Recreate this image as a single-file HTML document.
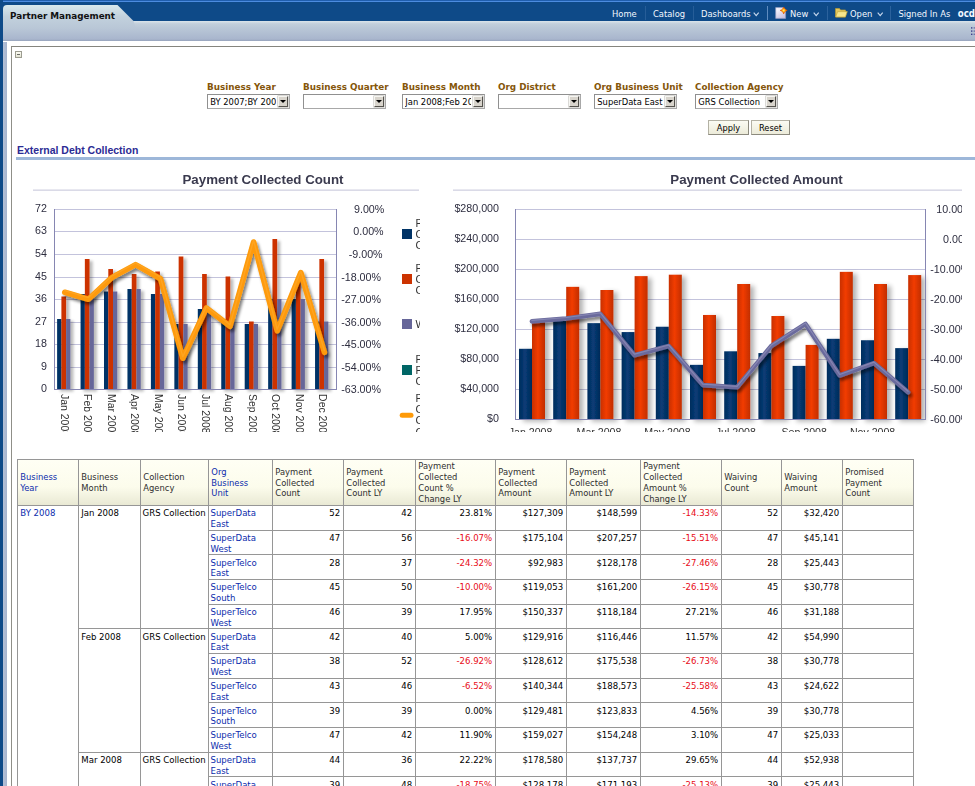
<!DOCTYPE html><html><head><meta charset="utf-8"><title>Partner Management</title><style>
html,body{margin:0;padding:0;}
body{width:975px;height:786px;overflow:hidden;background:#fff;position:relative;font-family:"DejaVu Sans Condensed","DejaVu Sans","Liberation Sans",sans-serif;font-size:9.2px;color:#000;}
.a{position:absolute;}
.t{position:absolute;white-space:nowrap;line-height:12px;}
.b{font-weight:bold;}
.nav{color:#f4f8ff;font-size:9.3px;top:8px;}
.lbl{color:#85560a;font-weight:bold;font-family:"DejaVu Sans","Liberation Sans",sans-serif;font-size:8.8px;top:81.2px;}
.sel{position:absolute;top:94.3px;height:12.6px;width:81px;border:1px solid #a8a8a8;border-top-color:#909090;border-left-color:#909090;background:#fff;overflow:hidden;}
.sel span{position:absolute;left:2.3px;top:1px;width:66px;overflow:hidden;line-height:12px;white-space:nowrap;font-size:9.3px;}
.sel i{position:absolute;right:0.6px;top:1px;width:8.4px;height:8.4px;background:#d8d4cc;border:1px solid #f6f6f2;border-right-color:#55534e;border-bottom-color:#55534e;box-shadow:0 0 0 0.5px #b8b6b0;}
.sel i:after{content:"";position:absolute;left:1.2px;top:2.8px;border-left:3px solid transparent;border-right:3px solid transparent;border-top:3px solid #000;}
.btn{position:absolute;top:119.6px;height:13px;border:1px solid #b3b1a4;border-right-color:#8c8a7e;border-bottom-color:#8c8a7e;background:linear-gradient(#fbfbf3,#ecebd9);text-align:center;line-height:13px;font-size:9.2px;}
.hc{position:absolute;top:460px;height:45px;background:linear-gradient(#fffff4 0%,#fcfcec 60%,#e9e9d4 100%);}
.ht{position:absolute;left:2.3px;line-height:10.8px;font-size:9.3px;color:#2e2e2e;white-space:nowrap;}
.lnk{color:#0c2cac;}
.vl{position:absolute;width:1px;background:#969696;}
.hl{position:absolute;height:1px;background:#969696;}
.c{position:absolute;line-height:10.8px;font-size:9.5px;white-space:nowrap;}
.r{text-align:right;}
.neg{color:#e80c18;}
</style></head><body>
<div class="a" style="left:0;top:0;width:975px;height:21px;background:#0e4a88;"></div>
<div class="a" style="left:0;top:0;width:975px;height:2px;background:linear-gradient(#1f5eae 0%,#1f5eae 40%,#4c8ce0 55%,#4c8ce0 100%);"></div>
<div class="a" style="left:3px;top:21px;width:972px;height:20px;background:linear-gradient(#dbe5eb 0%,#c2cfdb 14%,#b9c7d7 35%,#a9b6cd 90%,#97a4bc 100%);"></div>
<div class="a" style="left:0;top:0;width:3px;height:786px;background:#0e4a88;"></div>
<div class="a" style="left:3px;top:42px;width:4px;height:745px;background:linear-gradient(90deg,#b4c0d6,#a6b4ce);"></div>
<svg class="a" style="left:0;top:0" width="140" height="42"><defs><linearGradient id="tg" x1="0" y1="5" x2="0" y2="28" gradientUnits="userSpaceOnUse"><stop offset="0" stop-color="#d8e8ec"/><stop offset="0.5" stop-color="#c2d1dd"/><stop offset="1" stop-color="#b9c7d7"/></linearGradient></defs><path d="M3 28 L3 9 Q3 5 7 5 L117.5 5 L133.5 21 L136 28 Z" fill="url(#tg)"/></svg>
<div class="t b" style="left:10px;top:9.6px;font-family:'DejaVu Sans','Liberation Sans',sans-serif;font-size:8.8px;color:#111;">Partner Management</div>
<div class="t nav" style="left:612px;">Home</div>
<div class="t nav" style="left:653px;">Catalog</div>
<div class="t nav" style="left:701px;">Dashboards</div>
<div class="t nav" style="left:790px;">New</div>
<div class="t nav" style="left:850px;">Open</div>
<div class="t nav" style="left:898.4px;">Signed In As</div>
<div class="t nav b" style="left:957.8px;font-size:9.6px;">ocd</div>
<svg class="a" style="left:753px;top:12px" width="7" height="5"><path d="M0.7 0.7 L3.2 3.6 L5.7 0.7" fill="none" stroke="#c8d8ee" stroke-width="1.1"/></svg>
<svg class="a" style="left:813px;top:12px" width="7" height="5"><path d="M0.7 0.7 L3.2 3.6 L5.7 0.7" fill="none" stroke="#c8d8ee" stroke-width="1.1"/></svg>
<svg class="a" style="left:877px;top:12px" width="7" height="5"><path d="M0.7 0.7 L3.2 3.6 L5.7 0.7" fill="none" stroke="#c8d8ee" stroke-width="1.1"/></svg>
<div class="a" style="left:645px;top:6px;width:1px;height:14px;background:rgba(150,185,230,0.18);"></div>
<div class="a" style="left:693px;top:6px;width:1px;height:14px;background:rgba(150,185,230,0.18);"></div>
<div class="a" style="left:767px;top:6px;width:1px;height:14px;background:rgba(150,185,230,0.6);"></div>
<div class="a" style="left:827px;top:6px;width:1px;height:14px;background:rgba(150,185,230,0.22);"></div>
<div class="a" style="left:890px;top:6px;width:1px;height:14px;background:rgba(150,185,230,0.22);"></div>
<svg class="a" style="left:775px;top:5px" width="14" height="15"><defs><linearGradient id="pg" x1="0" y1="0" x2="0.6" y2="1"><stop offset="0" stop-color="#ffffff"/><stop offset="1" stop-color="#c9c3e2"/></linearGradient><radialGradient id="st" cx="0.5" cy="0.5" r="0.5"><stop offset="0" stop-color="#fff27a"/><stop offset="0.55" stop-color="#ffc020"/><stop offset="1" stop-color="#f06a00"/></radialGradient></defs><path d="M0.7 2.6 H8 L10.6 5.2 V13.4 H0.7 Z" fill="url(#pg)" stroke="#8e98c0" stroke-width="0.7"/><path d="M8.7 2 L9.7 4.4 L12.2 5.4 L9.7 6.4 L8.7 8.9 L7.7 6.4 L5.2 5.4 L7.7 4.4 Z" fill="url(#st)" stroke="#e05800" stroke-width="0.7" stroke-linejoin="round"/><circle cx="8.7" cy="5.4" r="2.1" fill="url(#st)"/></svg>
<svg class="a" style="left:835px;top:7px" width="13" height="11"><path d="M0.5 10 V1.5 H4.5 L5.5 3 H10.5 V10 Z" fill="#e2c860" stroke="#b89a30" stroke-width="0.7"/><path d="M0.7 10 L2.6 4.6 H12.3 L10.4 10 Z" fill="#f6e68c" stroke="#c4a73c" stroke-width="0.7"/></svg>
<svg class="a" style="left:970px;top:26px" width="5" height="10"><g fill="#3e3e8c"><rect x="1" y="1.2" width="1.4" height="1.4"/><rect x="3.6" y="1.2" width="1.4" height="1.4" opacity="0.6"/><rect x="1" y="4.4" width="1.4" height="1.4"/><rect x="3.6" y="4.4" width="1.4" height="1.4" opacity="0.6"/><rect x="1" y="7.6" width="1.4" height="1.4"/><rect x="3.6" y="7.6" width="1.4" height="1.4" opacity="0.6"/></g></svg>
<div class="a" style="left:11px;top:46px;width:970px;height:760px;border:1px solid #8f8f88;border-top-color:#85857e;"></div>
<div class="a" style="left:15px;top:51px;width:5px;height:5px;border:1px solid #9c9c90;background:linear-gradient(#fbfbf2,#e2e2d2);"><div class="a" style="left:0.8px;top:1.9px;width:3.4px;height:1.1px;background:#6a6a66;"></div></div>
<div class="t lbl" style="left:207px;">Business Year</div>
<div class="sel" style="left:207px;"><span>BY 2007;BY 2008</span><i></i></div>
<div class="t lbl" style="left:303px;">Business Quarter</div>
<div class="sel" style="left:303px;"><span></span><i></i></div>
<div class="t lbl" style="left:402px;">Business Month</div>
<div class="sel" style="left:402px;"><span>Jan 2008;Feb 2008;Mar 2008</span><i></i></div>
<div class="t lbl" style="left:498px;">Org District</div>
<div class="sel" style="left:498px;"><span></span><i></i></div>
<div class="t lbl" style="left:594px;">Org Business Unit</div>
<div class="sel" style="left:594px;"><span>SuperData East</span><i></i></div>
<div class="t lbl" style="left:695px;">Collection Agency</div>
<div class="sel" style="left:695px;"><span>GRS Collection</span><i></i></div>
<div class="btn" style="left:708px;width:39px;">Apply</div>
<div class="btn" style="left:751px;width:37px;">Reset</div>
<div class="t b" style="left:17px;top:143.9px;font-family:'Liberation Sans',Arial,sans-serif;font-size:10.5px;color:#2b2b94;">External Debt Collection</div>
<div class="a" style="left:16px;top:157px;width:959px;height:3px;background:#9db7d9;"></div>
<div class="a" style="left:33px;top:165px;width:387px;height:267px;overflow:hidden;">
<svg width="387" height="287" viewBox="33 165 387 287" style="position:absolute;left:0;top:0;opacity:0.999;font-family:'Liberation Sans',Arial,sans-serif;">
<defs>
<filter id="sh1" x="-30%" y="-10%" width="180%" height="120%"><feGaussianBlur in="SourceAlpha" stdDeviation="1.8"/><feOffset dx="2.5" dy="1.5"/><feComponentTransfer><feFuncA type="linear" slope="0.28"/></feComponentTransfer><feMerge><feMergeNode/><feMergeNode in="SourceGraphic"/></feMerge></filter>
<filter id="sh2" x="-10%" y="-20%" width="120%" height="140%"><feGaussianBlur in="SourceAlpha" stdDeviation="1.8"/><feOffset dx="2" dy="3"/><feComponentTransfer><feFuncA type="linear" slope="0.5"/></feComponentTransfer><feMerge><feMergeNode/><feMergeNode in="SourceGraphic"/></feMerge></filter>
<linearGradient id="og" x1="0" y1="0" x2="0" y2="1"><stop offset="0" stop-color="#ffb437"/><stop offset="1" stop-color="#f58f00"/></linearGradient>
</defs>
<text x="263" y="184" text-anchor="middle" font-size="13.3" font-weight="bold" fill="#3a3a4e">Payment Collected Count</text>
<rect x="33" y="189.5" width="386" height="1.3" fill="#d2d2e2"/>
<rect x="54.4" y="209" width="282.0" height="1" fill="#c3c3dc"/>
<rect x="54.4" y="231" width="282.0" height="1" fill="#c3c3dc"/>
<rect x="54.4" y="254" width="282.0" height="1" fill="#c3c3dc"/>
<rect x="54.4" y="277" width="282.0" height="1" fill="#c3c3dc"/>
<rect x="54.4" y="299" width="282.0" height="1" fill="#c3c3dc"/>
<rect x="54.4" y="322" width="282.0" height="1" fill="#c3c3dc"/>
<rect x="54.4" y="344" width="282.0" height="1" fill="#c3c3dc"/>
<rect x="54.4" y="367" width="282.0" height="1" fill="#c3c3dc"/>
<text x="46.9" y="212.2" text-anchor="end" font-size="10.7" fill="#2e2e40">72</text>
<text x="46.9" y="234.2" text-anchor="end" font-size="10.7" fill="#2e2e40">63</text>
<text x="46.9" y="257.2" text-anchor="end" font-size="10.7" fill="#2e2e40">54</text>
<text x="46.9" y="280.2" text-anchor="end" font-size="10.7" fill="#2e2e40">45</text>
<text x="46.9" y="302.2" text-anchor="end" font-size="10.7" fill="#2e2e40">36</text>
<text x="46.9" y="325.2" text-anchor="end" font-size="10.7" fill="#2e2e40">27</text>
<text x="46.9" y="347.2" text-anchor="end" font-size="10.7" fill="#2e2e40">18</text>
<text x="46.9" y="370.2" text-anchor="end" font-size="10.7" fill="#2e2e40">9</text>
<text x="46.9" y="392.2" text-anchor="end" font-size="10.7" fill="#2e2e40">0</text>
<text x="384.3" y="212.9" text-anchor="end" font-size="10.7" fill="#2e2e40">9.00%</text>
<text x="383.6" y="234.9" text-anchor="end" font-size="10.7" fill="#2e2e40">0.00%</text>
<text x="382.6" y="257.9" text-anchor="end" font-size="10.7" fill="#2e2e40">-9.00%</text>
<text x="381" y="280.9" text-anchor="end" font-size="10.7" fill="#2e2e40">-18.00%</text>
<text x="381" y="302.9" text-anchor="end" font-size="10.7" fill="#2e2e40">-27.00%</text>
<text x="381" y="325.9" text-anchor="end" font-size="10.7" fill="#2e2e40">-36.00%</text>
<text x="381" y="347.9" text-anchor="end" font-size="10.7" fill="#2e2e40">-45.00%</text>
<text x="381" y="370.9" text-anchor="end" font-size="10.7" fill="#2e2e40">-54.00%</text>
<text x="381" y="392.9" text-anchor="end" font-size="10.7" fill="#2e2e40">-63.00%</text>
<g filter="url(#sh1)">
<rect x="57.10" y="319.00" width="4.3" height="70.50" fill="#003366"/>
<rect x="61.40" y="296.50" width="4.7" height="93.00" fill="#cc3300"/>
<rect x="66.10" y="319.00" width="4.3" height="70.50" fill="#666699"/>
<rect x="80.55" y="294.00" width="4.3" height="95.50" fill="#003366"/>
<rect x="84.85" y="259.00" width="4.7" height="130.50" fill="#cc3300"/>
<rect x="89.55" y="294.00" width="4.3" height="95.50" fill="#666699"/>
<rect x="104.00" y="291.50" width="4.3" height="98.00" fill="#003366"/>
<rect x="108.30" y="269.00" width="4.7" height="120.50" fill="#cc3300"/>
<rect x="113.00" y="291.50" width="4.3" height="98.00" fill="#666699"/>
<rect x="127.45" y="289.00" width="4.3" height="100.50" fill="#003366"/>
<rect x="131.75" y="274.00" width="4.7" height="115.50" fill="#cc3300"/>
<rect x="136.45" y="289.00" width="4.3" height="100.50" fill="#666699"/>
<rect x="150.90" y="294.00" width="4.3" height="95.50" fill="#003366"/>
<rect x="155.20" y="271.50" width="4.7" height="118.00" fill="#cc3300"/>
<rect x="159.90" y="294.00" width="4.3" height="95.50" fill="#666699"/>
<rect x="174.35" y="324.00" width="4.3" height="65.50" fill="#003366"/>
<rect x="178.65" y="256.50" width="4.7" height="133.00" fill="#cc3300"/>
<rect x="183.35" y="324.00" width="4.3" height="65.50" fill="#666699"/>
<rect x="197.80" y="309.00" width="4.3" height="80.50" fill="#003366"/>
<rect x="202.10" y="274.00" width="4.7" height="115.50" fill="#cc3300"/>
<rect x="206.80" y="309.00" width="4.3" height="80.50" fill="#666699"/>
<rect x="221.25" y="319.00" width="4.3" height="70.50" fill="#003366"/>
<rect x="225.55" y="276.50" width="4.7" height="113.00" fill="#cc3300"/>
<rect x="230.25" y="319.00" width="4.3" height="70.50" fill="#666699"/>
<rect x="244.70" y="324.00" width="4.3" height="65.50" fill="#003366"/>
<rect x="249.00" y="321.50" width="4.7" height="68.00" fill="#cc3300"/>
<rect x="253.70" y="324.00" width="4.3" height="65.50" fill="#666699"/>
<rect x="268.15" y="299.00" width="4.3" height="90.50" fill="#003366"/>
<rect x="272.45" y="239.00" width="4.7" height="150.50" fill="#cc3300"/>
<rect x="277.15" y="299.00" width="4.3" height="90.50" fill="#666699"/>
<rect x="291.60" y="299.00" width="4.3" height="90.50" fill="#003366"/>
<rect x="295.90" y="279.00" width="4.7" height="110.50" fill="#cc3300"/>
<rect x="300.60" y="299.00" width="4.3" height="90.50" fill="#666699"/>
<rect x="315.05" y="321.50" width="4.3" height="68.00" fill="#003366"/>
<rect x="319.35" y="259.00" width="4.7" height="130.50" fill="#cc3300"/>
<rect x="324.05" y="321.50" width="4.3" height="68.00" fill="#666699"/>
</g>
<rect x="54" y="209" width="1" height="181" fill="#8686b2"/>
<rect x="336" y="209" width="1" height="181" fill="#8686b2"/>
<rect x="54" y="389" width="283" height="1" fill="#8686b2"/>
<text transform="translate(60.7,394.1) rotate(90) scale(0.985,1.06)" font-size="10.6" fill="#333">Jan 2008</text>
<text transform="translate(84.2,394.1) rotate(90) scale(0.985,1.06)" font-size="10.6" fill="#333">Feb 2008</text>
<text transform="translate(107.7,394.1) rotate(90) scale(0.985,1.06)" font-size="10.6" fill="#333">Mar 2008</text>
<text transform="translate(131.2,394.1) rotate(90) scale(0.985,1.06)" font-size="10.6" fill="#333">Apr 2008</text>
<text transform="translate(154.7,394.1) rotate(90) scale(0.985,1.06)" font-size="10.6" fill="#333">May 2008</text>
<text transform="translate(178.2,394.1) rotate(90) scale(0.985,1.06)" font-size="10.6" fill="#333">Jun 2008</text>
<text transform="translate(201.7,394.1) rotate(90) scale(0.985,1.06)" font-size="10.6" fill="#333">Jul 2008</text>
<text transform="translate(225.2,394.1) rotate(90) scale(0.985,1.06)" font-size="10.6" fill="#333">Aug 2008</text>
<text transform="translate(248.7,394.1) rotate(90) scale(0.985,1.06)" font-size="10.6" fill="#333">Sep 2008</text>
<text transform="translate(272.1,394.1) rotate(90) scale(0.985,1.06)" font-size="10.6" fill="#333">Oct 2008</text>
<text transform="translate(295.6,394.1) rotate(90) scale(0.985,1.06)" font-size="10.6" fill="#333">Nov 2008</text>
<text transform="translate(319.1,394.1) rotate(90) scale(0.985,1.06)" font-size="10.6" fill="#333">Dec 2008</text>
<polyline points="64.8,292.3 88.4,299.2 112.0,277.4 135.6,264.6 160.5,278.8 182.8,358.2 206.4,308 230.0,326.3 253.6,242.0 277.2,330.9 300.8,272.6 324.4,352.3" fill="none" stroke="#fe9a08" stroke-width="5.6" stroke-linejoin="round" stroke-linecap="round" filter="url(#sh2)"/>
<polyline points="64.8,292.3 88.4,299.2 112.0,277.4 135.6,264.6 160.5,278.8 182.8,358.2 206.4,308 230.0,326.3 253.6,242.0 277.2,330.9 300.8,272.6 324.4,352.3" fill="none" stroke="#ffbe50" stroke-width="1.4" stroke-linejoin="round" stroke-linecap="round" transform="translate(0,-1.6)" opacity="0.3"/>
<rect x="402" y="229" width="10" height="10" fill="#003366"/>
<text x="415.5" y="226.5" font-size="10.6" fill="#333">Payment</text>
<text x="415.5" y="237.8" font-size="10.6" fill="#333">Collected</text>
<text x="415.5" y="249.1" font-size="10.6" fill="#333">Count</text>
<rect x="402" y="274" width="10" height="10" fill="#cc3300"/>
<text x="415.5" y="271.5" font-size="10.6" fill="#333">Payment</text>
<text x="415.5" y="282.8" font-size="10.6" fill="#333">Collected</text>
<text x="415.5" y="294.1" font-size="10.6" fill="#333">Count LY</text>
<rect x="402" y="319" width="10" height="10" fill="#666699"/>
<text x="415.5" y="327.8" font-size="10.6" fill="#333">Waiving Count</text>
<rect x="402" y="365" width="10" height="10" fill="#006666"/>
<text x="415.5" y="362.5" font-size="10.6" fill="#333">Promised</text>
<text x="415.5" y="373.8" font-size="10.6" fill="#333">Payment</text>
<text x="415.5" y="385.1" font-size="10.6" fill="#333">Count</text>
<line x1="402.2" y1="415.3" x2="411" y2="415.3" stroke="#fe9a08" stroke-width="5" stroke-linecap="round"/>
<text x="415.5" y="401.9" font-size="10.6" fill="#333">Payment</text>
<text x="415.5" y="413.2" font-size="10.6" fill="#333">Collected</text>
<text x="415.5" y="424.4" font-size="10.6" fill="#333">Count %</text>
<text x="415.5" y="435.8" font-size="10.6" fill="#333">Change LY</text>
</svg></div>
<div class="a" style="left:453px;top:165px;width:509px;height:267px;overflow:hidden;">
<svg width="509" height="287" viewBox="453 165 509 287" style="position:absolute;left:0;top:0;opacity:0.999;font-family:'Liberation Sans',Arial,sans-serif;">
<defs>
<filter id="sh3" x="-30%" y="-10%" width="180%" height="120%"><feGaussianBlur in="SourceAlpha" stdDeviation="2.5"/><feOffset dx="3.8" dy="1.5"/><feComponentTransfer><feFuncA type="linear" slope="0.3"/></feComponentTransfer><feMerge><feMergeNode/><feMergeNode in="SourceGraphic"/></feMerge></filter>
<filter id="sh4" x="-10%" y="-20%" width="120%" height="140%"><feGaussianBlur in="SourceAlpha" stdDeviation="1.6"/><feOffset dx="1.5" dy="3"/><feComponentTransfer><feFuncA type="linear" slope="0.5"/></feComponentTransfer><feMerge><feMergeNode/><feMergeNode in="SourceGraphic"/></feMerge></filter>
<linearGradient id="gn" x1="0" y1="0" x2="1" y2="0"><stop offset="0" stop-color="#002c5c"/><stop offset="0.45" stop-color="#093c76"/><stop offset="1" stop-color="#002a58"/></linearGradient>
<linearGradient id="gr" x1="0" y1="0" x2="1" y2="0"><stop offset="0" stop-color="#c83000"/><stop offset="0.45" stop-color="#f23c00"/><stop offset="1" stop-color="#c22e00"/></linearGradient>
</defs>
<text x="756.5" y="184" text-anchor="middle" font-size="13.3" font-weight="bold" fill="#3a3a4e">Payment Collected Amount</text>
<rect x="453" y="189.5" width="509" height="1.3" fill="#d2d2e2"/>
<rect x="515.5" y="209" width="410.0" height="1" fill="#c3c3dc"/>
<rect x="515.5" y="239" width="410.0" height="1" fill="#c3c3dc"/>
<rect x="515.5" y="269" width="410.0" height="1" fill="#c3c3dc"/>
<rect x="515.5" y="299" width="410.0" height="1" fill="#c3c3dc"/>
<rect x="515.5" y="329" width="410.0" height="1" fill="#c3c3dc"/>
<rect x="515.5" y="359" width="410.0" height="1" fill="#c3c3dc"/>
<rect x="515.5" y="389" width="410.0" height="1" fill="#c3c3dc"/>
<text x="499" y="212.2" text-anchor="end" font-size="10.7" fill="#2e2e40">$280,000</text>
<text x="499" y="242.2" text-anchor="end" font-size="10.7" fill="#2e2e40">$240,000</text>
<text x="499" y="272.2" text-anchor="end" font-size="10.7" fill="#2e2e40">$200,000</text>
<text x="499" y="302.2" text-anchor="end" font-size="10.7" fill="#2e2e40">$160,000</text>
<text x="499" y="332.2" text-anchor="end" font-size="10.7" fill="#2e2e40">$120,000</text>
<text x="499" y="362.2" text-anchor="end" font-size="10.7" fill="#2e2e40">$80,000</text>
<text x="499" y="392.2" text-anchor="end" font-size="10.7" fill="#2e2e40">$40,000</text>
<text x="499" y="422.2" text-anchor="end" font-size="10.7" fill="#2e2e40">$0</text>
<text x="936.3" y="212.9" font-size="10.7" fill="#2e2e40">10.00%</text>
<text x="943.1" y="242.9" font-size="10.7" fill="#2e2e40">0.00%</text>
<text x="930.3" y="272.9" font-size="10.7" fill="#2e2e40">-10.00%</text>
<text x="930.3" y="302.9" font-size="10.7" fill="#2e2e40">-20.00%</text>
<text x="930.3" y="332.9" font-size="10.7" fill="#2e2e40">-30.00%</text>
<text x="930.3" y="362.9" font-size="10.7" fill="#2e2e40">-40.00%</text>
<text x="930.3" y="392.9" font-size="10.7" fill="#2e2e40">-50.00%</text>
<text x="930.3" y="422.9" font-size="10.7" fill="#2e2e40">-60.00%</text>
<g filter="url(#sh3)">
<rect x="519.00" y="348.80" width="13.0" height="70.70" fill="url(#gn)"/>
<rect x="532.00" y="322.10" width="13.0" height="97.40" fill="url(#gr)"/>
<rect x="553.20" y="321.05" width="13.0" height="98.45" fill="url(#gn)"/>
<rect x="566.20" y="286.85" width="13.0" height="132.65" fill="url(#gr)"/>
<rect x="587.40" y="323.15" width="13.0" height="96.35" fill="url(#gn)"/>
<rect x="600.40" y="290.00" width="13.0" height="129.50" fill="url(#gr)"/>
<rect x="621.60" y="332.07" width="13.0" height="87.43" fill="url(#gn)"/>
<rect x="634.60" y="276.12" width="13.0" height="143.38" fill="url(#gr)"/>
<rect x="655.80" y="326.75" width="13.0" height="92.75" fill="url(#gn)"/>
<rect x="668.80" y="274.70" width="13.0" height="144.80" fill="url(#gr)"/>
<rect x="690.00" y="364.85" width="13.0" height="54.65" fill="url(#gn)"/>
<rect x="703.00" y="314.98" width="13.0" height="104.52" fill="url(#gr)"/>
<rect x="724.20" y="351.31" width="13.0" height="68.19" fill="url(#gn)"/>
<rect x="737.20" y="284.00" width="13.0" height="135.50" fill="url(#gr)"/>
<rect x="758.40" y="353.07" width="13.0" height="66.43" fill="url(#gn)"/>
<rect x="771.40" y="316.02" width="13.0" height="103.48" fill="url(#gr)"/>
<rect x="792.60" y="365.90" width="13.0" height="53.60" fill="url(#gn)"/>
<rect x="805.60" y="344.90" width="13.0" height="74.60" fill="url(#gr)"/>
<rect x="826.80" y="338.82" width="13.0" height="80.68" fill="url(#gn)"/>
<rect x="839.80" y="271.85" width="13.0" height="147.65" fill="url(#gr)"/>
<rect x="861.00" y="340.25" width="13.0" height="79.25" fill="url(#gn)"/>
<rect x="874.00" y="284.00" width="13.0" height="135.50" fill="url(#gr)"/>
<rect x="895.20" y="348.12" width="13.0" height="71.38" fill="url(#gn)"/>
<rect x="908.20" y="275.07" width="13.0" height="144.43" fill="url(#gr)"/>
</g>
<rect x="515" y="209" width="1" height="211" fill="#8686b2"/>
<rect x="925" y="209" width="1" height="211" fill="#8686b2"/>
<rect x="515" y="419" width="411" height="1" fill="#8686b2"/>
<text x="530.6" y="436" text-anchor="middle" font-size="10.6" fill="#333">Jan 2008</text>
<text x="599.0" y="436" text-anchor="middle" font-size="10.6" fill="#333">Mar 2008</text>
<text x="667.4" y="436" text-anchor="middle" font-size="10.6" fill="#333">May 2008</text>
<text x="735.8" y="436" text-anchor="middle" font-size="10.6" fill="#333">Jul 2008</text>
<text x="804.2" y="436" text-anchor="middle" font-size="10.6" fill="#333">Sep 2008</text>
<text x="872.6" y="436" text-anchor="middle" font-size="10.6" fill="#333">Nov 2008</text>
<polyline points="531.9,321.4 566.1,318.5 600.3,313.9 634.5,355.2 668.7,346 702.9,385.1 737.1,387.3 771.3,346 805.5,323.9 839.7,375.5 873.9,363.1 908.1,392.3" fill="none" stroke="#6a6a9c" stroke-width="4.6" stroke-linejoin="round" stroke-linecap="round" filter="url(#sh4)"/>
<polyline points="531.9,321.4 566.1,318.5 600.3,313.9 634.5,355.2 668.7,346 702.9,385.1 737.1,387.3 771.3,346 805.5,323.9 839.7,375.5 873.9,363.1 908.1,392.3" fill="none" stroke="#8c8cb8" stroke-width="1.2" stroke-linejoin="round" stroke-linecap="round" transform="translate(0,-1)" opacity="0.8"/>
</svg></div>
<div class="hc" style="left:18px;width:60px;"><div class="ht lnk" style="top:12.2px;">Business<br>Year</div></div>
<div class="hc" style="left:79px;width:61px;"><div class="ht" style="top:12.2px;">Business<br>Month</div></div>
<div class="hc" style="left:141px;width:67px;"><div class="ht" style="top:12.2px;">Collection<br>Agency</div></div>
<div class="hc" style="left:209px;width:63px;"><div class="ht lnk" style="top:6.8px;">Org<br>Business<br>Unit</div></div>
<div class="hc" style="left:273px;width:70px;"><div class="ht" style="top:6.8px;">Payment<br>Collected<br>Count</div></div>
<div class="hc" style="left:344px;width:71px;"><div class="ht" style="top:6.8px;">Payment<br>Collected<br>Count LY</div></div>
<div class="hc" style="left:416px;width:79px;"><div class="ht" style="top:1.4px;">Payment<br>Collected<br>Count %<br>Change LY</div></div>
<div class="hc" style="left:496px;width:70px;"><div class="ht" style="top:6.8px;">Payment<br>Collected<br>Amount</div></div>
<div class="hc" style="left:567px;width:73px;"><div class="ht" style="top:6.8px;">Payment<br>Collected<br>Amount LY</div></div>
<div class="hc" style="left:641px;width:80px;"><div class="ht" style="top:1.4px;">Payment<br>Collected<br>Amount %<br>Change LY</div></div>
<div class="hc" style="left:722px;width:59px;"><div class="ht" style="top:12.2px;">Waiving<br>Count</div></div>
<div class="hc" style="left:782px;width:60px;"><div class="ht" style="top:12.2px;">Waiving<br>Amount</div></div>
<div class="hc" style="left:843px;width:70px;"><div class="ht" style="top:6.8px;">Promised<br>Payment<br>Count</div></div>
<div class="vl" style="left:17px;top:459px;height:341px;"></div>
<div class="vl" style="left:78px;top:459px;height:341px;"></div>
<div class="vl" style="left:140px;top:459px;height:341px;"></div>
<div class="vl" style="left:208px;top:459px;height:341px;"></div>
<div class="vl" style="left:272px;top:459px;height:341px;"></div>
<div class="vl" style="left:343px;top:459px;height:341px;"></div>
<div class="vl" style="left:415px;top:459px;height:341px;"></div>
<div class="vl" style="left:495px;top:459px;height:341px;"></div>
<div class="vl" style="left:566px;top:459px;height:341px;"></div>
<div class="vl" style="left:640px;top:459px;height:341px;"></div>
<div class="vl" style="left:721px;top:459px;height:341px;"></div>
<div class="vl" style="left:781px;top:459px;height:341px;"></div>
<div class="vl" style="left:842px;top:459px;height:341px;"></div>
<div class="vl" style="left:913px;top:459px;height:341px;"></div>
<div class="hl" style="left:17px;top:459px;width:897px;"></div>
<div class="hl" style="left:17px;top:505px;width:897px;"></div>
<div class="hl" style="left:208px;top:530px;width:706px;"></div>
<div class="c lnk" style="left:20.3px;top:508.1px;">BY 2008</div>
<div class="c" style="left:81.3px;top:508.1px;">Jan 2008</div>
<div class="c" style="left:142.6px;top:508.1px;">GRS Collection</div>
<div class="c lnk" style="left:210.5px;top:508.1px;">SuperData<br>East</div>
<div class="c r" style="left:274px;width:66.19999999999999px;top:508.1px;">52</div>
<div class="c r" style="left:345px;width:67.19999999999999px;top:508.1px;">42</div>
<div class="c r" style="left:417px;width:75.19999999999999px;top:508.1px;">23.81%</div>
<div class="c r" style="left:497px;width:66.20000000000005px;top:508.1px;">$127,309</div>
<div class="c r" style="left:568px;width:69.20000000000005px;top:508.1px;">$148,599</div>
<div class="c r neg" style="left:642px;width:76.20000000000005px;top:508.1px;">-14.33%</div>
<div class="c r" style="left:723px;width:55.200000000000045px;top:508.1px;">52</div>
<div class="c r" style="left:783px;width:56.200000000000045px;top:508.1px;">$32,420</div>
<div class="hl" style="left:208px;top:554px;width:706px;"></div>
<div class="c lnk" style="left:210.5px;top:532.8px;">SuperData<br>West</div>
<div class="c r" style="left:274px;width:66.19999999999999px;top:532.8px;">47</div>
<div class="c r" style="left:345px;width:67.19999999999999px;top:532.8px;">56</div>
<div class="c r neg" style="left:417px;width:75.19999999999999px;top:532.8px;">-16.07%</div>
<div class="c r" style="left:497px;width:66.20000000000005px;top:532.8px;">$175,104</div>
<div class="c r" style="left:568px;width:69.20000000000005px;top:532.8px;">$207,257</div>
<div class="c r neg" style="left:642px;width:76.20000000000005px;top:532.8px;">-15.51%</div>
<div class="c r" style="left:723px;width:55.200000000000045px;top:532.8px;">47</div>
<div class="c r" style="left:783px;width:56.200000000000045px;top:532.8px;">$45,141</div>
<div class="hl" style="left:208px;top:579px;width:706px;"></div>
<div class="c lnk" style="left:210.5px;top:557.5px;">SuperTelco<br>East</div>
<div class="c r" style="left:274px;width:66.19999999999999px;top:557.5px;">28</div>
<div class="c r" style="left:345px;width:67.19999999999999px;top:557.5px;">37</div>
<div class="c r neg" style="left:417px;width:75.19999999999999px;top:557.5px;">-24.32%</div>
<div class="c r" style="left:497px;width:66.20000000000005px;top:557.5px;">$92,983</div>
<div class="c r" style="left:568px;width:69.20000000000005px;top:557.5px;">$128,178</div>
<div class="c r neg" style="left:642px;width:76.20000000000005px;top:557.5px;">-27.46%</div>
<div class="c r" style="left:723px;width:55.200000000000045px;top:557.5px;">28</div>
<div class="c r" style="left:783px;width:56.200000000000045px;top:557.5px;">$25,443</div>
<div class="hl" style="left:208px;top:604px;width:706px;"></div>
<div class="c lnk" style="left:210.5px;top:582.1px;">SuperTelco<br>South</div>
<div class="c r" style="left:274px;width:66.19999999999999px;top:582.1px;">45</div>
<div class="c r" style="left:345px;width:67.19999999999999px;top:582.1px;">50</div>
<div class="c r neg" style="left:417px;width:75.19999999999999px;top:582.1px;">-10.00%</div>
<div class="c r" style="left:497px;width:66.20000000000005px;top:582.1px;">$119,053</div>
<div class="c r" style="left:568px;width:69.20000000000005px;top:582.1px;">$161,200</div>
<div class="c r neg" style="left:642px;width:76.20000000000005px;top:582.1px;">-26.15%</div>
<div class="c r" style="left:723px;width:55.200000000000045px;top:582.1px;">45</div>
<div class="c r" style="left:783px;width:56.200000000000045px;top:582.1px;">$30,778</div>
<div class="hl" style="left:78px;top:628px;width:836px;"></div>
<div class="c lnk" style="left:210.5px;top:606.8px;">SuperTelco<br>West</div>
<div class="c r" style="left:274px;width:66.19999999999999px;top:606.8px;">46</div>
<div class="c r" style="left:345px;width:67.19999999999999px;top:606.8px;">39</div>
<div class="c r" style="left:417px;width:75.19999999999999px;top:606.8px;">17.95%</div>
<div class="c r" style="left:497px;width:66.20000000000005px;top:606.8px;">$150,337</div>
<div class="c r" style="left:568px;width:69.20000000000005px;top:606.8px;">$118,184</div>
<div class="c r" style="left:642px;width:76.20000000000005px;top:606.8px;">27.21%</div>
<div class="c r" style="left:723px;width:55.200000000000045px;top:606.8px;">46</div>
<div class="c r" style="left:783px;width:56.200000000000045px;top:606.8px;">$31,188</div>
<div class="hl" style="left:208px;top:653px;width:706px;"></div>
<div class="c" style="left:81.3px;top:631.5px;">Feb 2008</div>
<div class="c" style="left:142.6px;top:631.5px;">GRS Collection</div>
<div class="c lnk" style="left:210.5px;top:631.5px;">SuperData<br>East</div>
<div class="c r" style="left:274px;width:66.19999999999999px;top:631.5px;">42</div>
<div class="c r" style="left:345px;width:67.19999999999999px;top:631.5px;">40</div>
<div class="c r" style="left:417px;width:75.19999999999999px;top:631.5px;">5.00%</div>
<div class="c r" style="left:497px;width:66.20000000000005px;top:631.5px;">$129,916</div>
<div class="c r" style="left:568px;width:69.20000000000005px;top:631.5px;">$116,446</div>
<div class="c r" style="left:642px;width:76.20000000000005px;top:631.5px;">11.57%</div>
<div class="c r" style="left:723px;width:55.200000000000045px;top:631.5px;">42</div>
<div class="c r" style="left:783px;width:56.200000000000045px;top:631.5px;">$54,990</div>
<div class="hl" style="left:208px;top:678px;width:706px;"></div>
<div class="c lnk" style="left:210.5px;top:656.2px;">SuperData<br>West</div>
<div class="c r" style="left:274px;width:66.19999999999999px;top:656.2px;">38</div>
<div class="c r" style="left:345px;width:67.19999999999999px;top:656.2px;">52</div>
<div class="c r neg" style="left:417px;width:75.19999999999999px;top:656.2px;">-26.92%</div>
<div class="c r" style="left:497px;width:66.20000000000005px;top:656.2px;">$128,612</div>
<div class="c r" style="left:568px;width:69.20000000000005px;top:656.2px;">$175,538</div>
<div class="c r neg" style="left:642px;width:76.20000000000005px;top:656.2px;">-26.73%</div>
<div class="c r" style="left:723px;width:55.200000000000045px;top:656.2px;">38</div>
<div class="c r" style="left:783px;width:56.200000000000045px;top:656.2px;">$30,778</div>
<div class="hl" style="left:208px;top:702px;width:706px;"></div>
<div class="c lnk" style="left:210.5px;top:680.9px;">SuperTelco<br>East</div>
<div class="c r" style="left:274px;width:66.19999999999999px;top:680.9px;">43</div>
<div class="c r" style="left:345px;width:67.19999999999999px;top:680.9px;">46</div>
<div class="c r neg" style="left:417px;width:75.19999999999999px;top:680.9px;">-6.52%</div>
<div class="c r" style="left:497px;width:66.20000000000005px;top:680.9px;">$140,344</div>
<div class="c r" style="left:568px;width:69.20000000000005px;top:680.9px;">$188,573</div>
<div class="c r neg" style="left:642px;width:76.20000000000005px;top:680.9px;">-25.58%</div>
<div class="c r" style="left:723px;width:55.200000000000045px;top:680.9px;">43</div>
<div class="c r" style="left:783px;width:56.200000000000045px;top:680.9px;">$24,622</div>
<div class="hl" style="left:208px;top:727px;width:706px;"></div>
<div class="c lnk" style="left:210.5px;top:705.5px;">SuperTelco<br>South</div>
<div class="c r" style="left:274px;width:66.19999999999999px;top:705.5px;">39</div>
<div class="c r" style="left:345px;width:67.19999999999999px;top:705.5px;">39</div>
<div class="c r" style="left:417px;width:75.19999999999999px;top:705.5px;">0.00%</div>
<div class="c r" style="left:497px;width:66.20000000000005px;top:705.5px;">$129,481</div>
<div class="c r" style="left:568px;width:69.20000000000005px;top:705.5px;">$123,833</div>
<div class="c r" style="left:642px;width:76.20000000000005px;top:705.5px;">4.56%</div>
<div class="c r" style="left:723px;width:55.200000000000045px;top:705.5px;">39</div>
<div class="c r" style="left:783px;width:56.200000000000045px;top:705.5px;">$30,778</div>
<div class="hl" style="left:78px;top:752px;width:836px;"></div>
<div class="c lnk" style="left:210.5px;top:730.2px;">SuperTelco<br>West</div>
<div class="c r" style="left:274px;width:66.19999999999999px;top:730.2px;">47</div>
<div class="c r" style="left:345px;width:67.19999999999999px;top:730.2px;">42</div>
<div class="c r" style="left:417px;width:75.19999999999999px;top:730.2px;">11.90%</div>
<div class="c r" style="left:497px;width:66.20000000000005px;top:730.2px;">$159,027</div>
<div class="c r" style="left:568px;width:69.20000000000005px;top:730.2px;">$154,248</div>
<div class="c r" style="left:642px;width:76.20000000000005px;top:730.2px;">3.10%</div>
<div class="c r" style="left:723px;width:55.200000000000045px;top:730.2px;">47</div>
<div class="c r" style="left:783px;width:56.200000000000045px;top:730.2px;">$25,033</div>
<div class="hl" style="left:208px;top:776px;width:706px;"></div>
<div class="c" style="left:81.3px;top:754.9px;">Mar 2008</div>
<div class="c" style="left:142.6px;top:754.9px;">GRS Collection</div>
<div class="c lnk" style="left:210.5px;top:754.9px;">SuperData<br>East</div>
<div class="c r" style="left:274px;width:66.19999999999999px;top:754.9px;">44</div>
<div class="c r" style="left:345px;width:67.19999999999999px;top:754.9px;">36</div>
<div class="c r" style="left:417px;width:75.19999999999999px;top:754.9px;">22.22%</div>
<div class="c r" style="left:497px;width:66.20000000000005px;top:754.9px;">$178,580</div>
<div class="c r" style="left:568px;width:69.20000000000005px;top:754.9px;">$137,737</div>
<div class="c r" style="left:642px;width:76.20000000000005px;top:754.9px;">29.65%</div>
<div class="c r" style="left:723px;width:55.200000000000045px;top:754.9px;">44</div>
<div class="c r" style="left:783px;width:56.200000000000045px;top:754.9px;">$52,938</div>
<div class="hl" style="left:208px;top:801px;width:706px;"></div>
<div class="c lnk" style="left:210.5px;top:779.6px;">SuperData<br>West</div>
<div class="c r" style="left:274px;width:66.19999999999999px;top:779.6px;">39</div>
<div class="c r" style="left:345px;width:67.19999999999999px;top:779.6px;">48</div>
<div class="c r neg" style="left:417px;width:75.19999999999999px;top:779.6px;">-18.75%</div>
<div class="c r" style="left:497px;width:66.20000000000005px;top:779.6px;">$128,178</div>
<div class="c r" style="left:568px;width:69.20000000000005px;top:779.6px;">$171,193</div>
<div class="c r neg" style="left:642px;width:76.20000000000005px;top:779.6px;">-25.13%</div>
<div class="c r" style="left:723px;width:55.200000000000045px;top:779.6px;">39</div>
<div class="c r" style="left:783px;width:56.200000000000045px;top:779.6px;">$25,443</div>
</body></html>
